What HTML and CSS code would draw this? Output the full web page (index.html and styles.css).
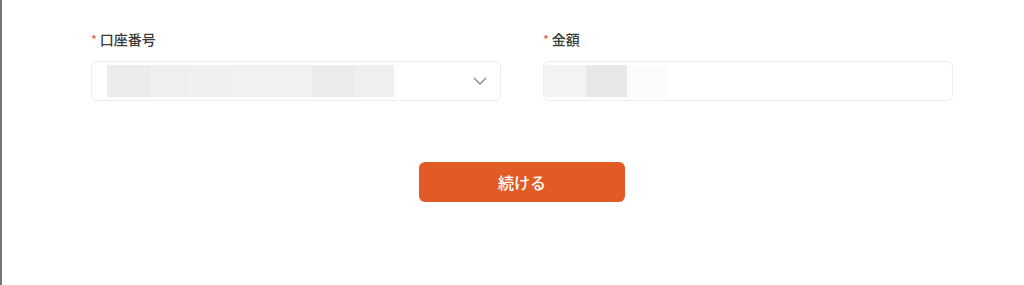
FILE: index.html
```html
<!DOCTYPE html>
<html lang="ja">
<head>
<meta charset="utf-8">
<link rel="stylesheet" href="styles.css">
</head>
<body>
<div class="frame">
  <form class="form">
    <div class="row">
      <div class="field">
        <label class="label"><span class="req">*</span>口座番号</label>
        <div class="control select">
          <div class="mask">
            <span class="seg" style="width:43px;background:#ececec"></span>
            <span class="seg" style="width:40px;background:#efefef"></span>
            <span class="seg" style="width:42px;background:#f0f0f0"></span>
            <span class="seg" style="width:38px;background:#f1f1f1"></span>
            <span class="seg" style="width:42px;background:#f2f1f1"></span>
            <span class="seg" style="width:42px;background:#ebebeb"></span>
            <span class="seg" style="width:40px;background:#efefef"></span>
          </div>
          <svg class="chev" width="14" height="8" viewBox="0 0 14 8"><path d="M1 1 L7 7 L13 1" fill="none" stroke="#8a8a8a" stroke-width="1.3"/></svg>
        </div>
      </div>
      <div class="field">
        <label class="label"><span class="req">*</span>金額</label>
        <div class="control input">
          <div class="mask">
            <span class="seg" style="width:42px;background:#f3f3f3"></span>
            <span class="seg" style="width:41px;background:#e8e8e8"></span>
            <span class="seg" style="width:41px;background:#fbfbfb"></span>
          </div>
        </div>
      </div>
    </div>
    <div class="actions">
      <button type="button" class="btn">続ける</button>
    </div>
  </form>
</div>
</body>
</html>
```
FILE: styles.css
```css
html, body {
  margin: 0;
  padding: 0;
  background: #fff;
}
body {
  font-family: "Noto Sans CJK JP", "Noto Sans", sans-serif;
}
.frame {
  height: 285px;
  border-left: 2px solid #777;
  box-sizing: border-box;
  padding: 28px 0 0 89px;
}
.form {
  width: 862px;
}
.row {
  display: flex;
  gap: 42px;
}
.field {
  flex: 1;
  display: flex;
  flex-direction: column;
}
.label {
  font-size: 14px;
  font-weight: 500;
  line-height: 22px;
  color: #3a3a3a;
  height: 22px;
  margin-bottom: 11px;
  display: flex;
  align-items: center;
}
.req {
  color: #e8634c;
  font-size: 12px;
  margin-left: 0;
  margin-right: 3px;
  line-height: 1;
  position: relative;
  top: 0;
}
.control {
  height: 40px;
  box-sizing: border-box;
  border: 1px solid #ececec;
  border-radius: 6px;
  display: flex;
  align-items: center;
  background: #fff;
}
.select {
  padding: 0 13px 0 15px;
  justify-content: space-between;
}
.input {
  padding: 0;
}
.mask {
  display: flex;
  height: 32px;
}
.seg {
  display: block;
  height: 100%;
}
.chev {
  display: block;
}
.actions {
  display: flex;
  justify-content: center;
  margin-top: 61px;
}
.btn {
  width: 206px;
  height: 40px;
  border: none;
  border-radius: 6px;
  background: #e25a26;
  color: #fff;
  font-family: "Noto Sans CJK JP", "Noto Sans", sans-serif;
  font-size: 16px;
  font-weight: 500;
  cursor: pointer;
}
```
